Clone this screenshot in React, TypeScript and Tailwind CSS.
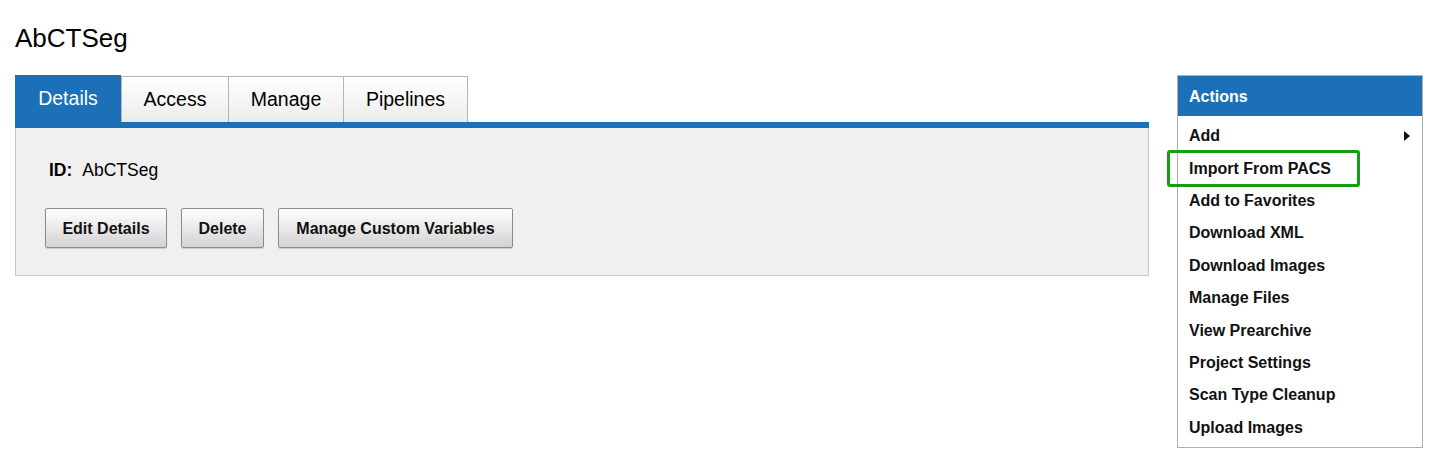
import React from "react";

const font = { fontFamily: '"Liberation Sans", Arial, Helvetica, sans-serif' };

const tabs = ["Access", "Manage", "Pipelines"];
const tabWidths = ["w-[108px]", "w-[115px]", "w-[124px]"];

const actions = [
  "Add",
  "Import From PACS",
  "Add to Favorites",
  "Download XML",
  "Download Images",
  "Manage Files",
  "View Prearchive",
  "Project Settings",
  "Scan Type Cleanup",
  "Upload Images",
];

function Btn({ label, w }: { label: string; w: string }) {
  return (
    <button
      className={`${w} h-[40px] border border-[#8c8c8c] rounded-[2px] bg-gradient-to-b from-[#ffffff] to-[#d3d3d3] text-[16px] font-bold text-[#111] shadow-[0_1px_1px_rgba(0,0,0,0.15)] flex items-center justify-center pt-[1px]`}
    >
      {label}
    </button>
  );
}

export default function App() {
  return (
    <div className="w-[1440px] h-[465px] bg-white text-black overflow-hidden" style={font}>
      <div className="pl-[15px] pt-[23px]">
        <h1 className="text-[26px] leading-[30px] font-normal">AbCTSeg</h1>
        <div className="flex mt-[22px] gap-[28px] items-start">
          {/* Left column */}
          <div className="w-[1134px]">
            <div className="flex items-end h-[47px]">
              <div className="w-[106px] h-[47px] bg-[#1b70b8] text-white text-[19.5px] flex items-center justify-center pt-[1px]">
                Details
              </div>
              {tabs.map((t, i) => (
                <div
                  key={t}
                  className={`${tabWidths[i]} h-[46px] border-t border-r border-[#b5b5b5] ${i === 0 ? "border-l" : ""} bg-gradient-to-b from-[#ffffff] to-[#ececec] text-[19.5px] flex items-center justify-center`}
                >
                  {t}
                </div>
              ))}
            </div>
            <div className="h-[6px] bg-[#1b70b8]" />
            <div className="bg-[#f0f0f0] border-l border-r border-b border-[#c8c8c8] pl-[29px] pt-[32px] pb-[27px]">
              <div className="h-[20px] flex items-center text-[17.5px] leading-[20px] pl-[4px]">
                <span className="font-bold">ID:</span>
                <span className="ml-[10px]">AbCTSeg</span>
              </div>
              <div className="flex gap-[14px] mt-[28px]">
                <Btn label="Edit Details" w="w-[122px]" />
                <Btn label="Delete" w="w-[83px]" />
                <Btn label="Manage Custom Variables" w="w-[235px]" />
              </div>
            </div>
          </div>

          {/* Actions box */}
          <div className="w-[246px] border border-[#b0b0b0] bg-white">
            <div className="h-[40px] bg-[#1b70b8] text-white font-bold text-[16px] flex items-center pl-[11px] pt-[1px]">
              Actions
            </div>
            <div className="pt-[4px] pb-[3px]">
              {actions.map((a, i) => (
                <div
                  key={a}
                  className="relative h-[32.4px] flex items-center pl-[11px] pr-[12px] text-[16px] font-bold text-[#111]"
                >
                  <span>{a}</span>
                  {i === 0 && (
                    <svg className="ml-auto" width="6" height="10" viewBox="0 0 6 10">
                      <path d="M0 0 L6 5 L0 10 Z" fill="#111" />
                    </svg>
                  )}
                  {i === 1 && (
                    <div className="absolute left-[-11px] top-[-2px] w-[193px] h-[37px] border-[3px] border-[#12a012] rounded-[3px] pointer-events-none" />
                  )}
                </div>
              ))}
            </div>
          </div>
        </div>
      </div>
    </div>
  );
}
